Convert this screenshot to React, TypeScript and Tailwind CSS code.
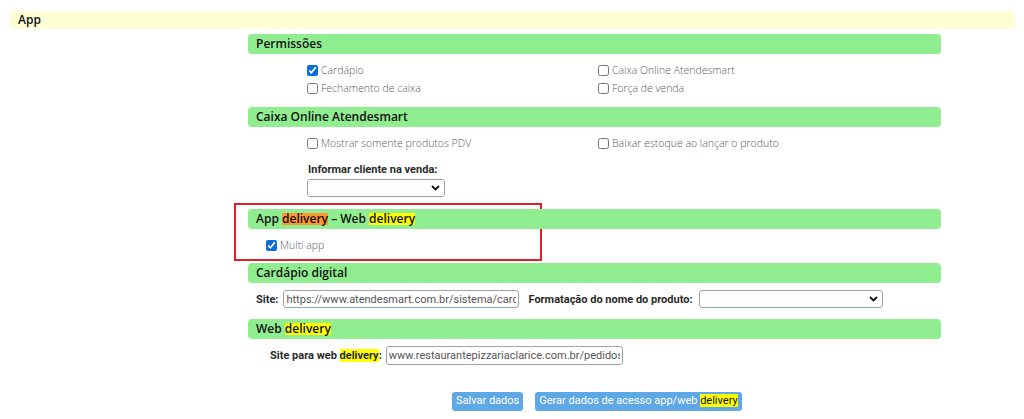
import React from 'react';

const head = "font-['Open_Sans',sans-serif] font-semibold text-[12px] text-[#111] leading-none";
const lbl = "font-['Open_Sans',sans-serif] font-light text-[10.5px] text-[#5c5c5c] leading-none";
const form = "font-['Roboto',sans-serif] font-bold text-[11px] text-[#2a2a2a] leading-none";

const Hl = ({ children, orange }: { children: React.ReactNode; orange?: boolean }) => (
  <span className={orange ? 'bg-[#ff9632]' : 'bg-[#ffff00]'}>{children}</span>
);

const SectionHeader = ({ children }: { children: React.ReactNode }) => (
  <div className={`h-[20px] bg-[#90ee90] rounded-[4px] flex items-center pl-[8px] ${head}`}>{children}</div>
);

const Check = ({ label, checked }: { label: string; checked?: boolean }) => (
  <label className="flex items-center gap-[3px] h-[12px]">
    <input type="checkbox" defaultChecked={checked} className="w-[11px] h-[11px] m-0 accent-[#0b6ed9]" />
    <span className={lbl}>{label}</span>
  </label>
);

const Select = ({ w }: { w: string }) => (
  <div className={`${w} h-[18px] border border-[#9aa3ad] rounded-[3px] bg-white flex items-center justify-end pr-[4px]`}>
    <svg width="9" height="6" viewBox="0 0 9 6">
      <path d="M1 1l3.5 3.5L8 1" fill="none" stroke="#111" strokeWidth="1.8" />
    </svg>
  </div>
);

export default function App() {
  return (
    <div className="w-[1024px] h-[419px] bg-white overflow-hidden pt-[11px]">
      <div className="ml-[10px] w-[1005px] h-[18px] bg-[#fffdd4] rounded-[3px] flex items-center pl-[8px] font-['Open_Sans',sans-serif] font-semibold text-[12px] text-[#111]">
        App
      </div>

      <div className="ml-[248px] w-[693px] mt-[5px]">
        <SectionHeader>Permissões</SectionHeader>
        <div className="pl-[59px] grid grid-cols-[291px_1fr] gap-y-[6px] mt-[10px]">
          <Check label="Cardápio" checked />
          <Check label="Caixa Online Atendesmart" />
          <Check label="Fechamento de caixa" />
          <Check label="Força de venda" />
        </div>

        <div className="mt-[13px]">
          <SectionHeader>Caixa Online Atendesmart</SectionHeader>
        </div>
        <div className="pl-[59px] grid grid-cols-[291px_1fr] mt-[10px]">
          <Check label="Mostrar somente produtos PDV" />
          <Check label="Baixar estoque ao lançar o produto" />
        </div>
        <div className="pl-[60px] mt-[15px]">
          <div className={form}>Informar cliente na venda:</div>
          <div className="mt-[4px] -ml-[1px]">
            <Select w="w-[138px]" />
          </div>
        </div>
      </div>

      <div className="ml-[234px] w-[308px] h-[58px] mt-[6px] border-2 border-[#d9232a] relative">
        <div className="absolute left-[12px] top-[4px] w-[693px]">
          <SectionHeader>
            App&nbsp;<Hl orange>delivery</Hl>&nbsp;– Web&nbsp;<Hl>delivery</Hl>
          </SectionHeader>
          <div className="pl-[18px] mt-[10px]">
            <Check label="Multi app" checked />
          </div>
        </div>
      </div>

      <div className="ml-[248px] w-[693px] mt-[2px]">
        <SectionHeader>Cardápio digital</SectionHeader>
        <div className="flex items-center pl-[8px] mt-[7px] h-[18px]">
          <span className={form}>Site:</span>
          <input
            readOnly
            value="https://www.atendesmart.com.br/sistema/cardapio"
            className="ml-[5px] w-[236px] h-[18px] border border-[#9aa3ad] rounded-[3px] px-[2px] font-['Roboto',sans-serif] text-[11px] text-[#555] outline-none"
          />
          <span className={`${form} ml-[9px]`}>Formatação do nome do produto:</span>
          <div className="ml-[6px]">
            <Select w="w-[184px]" />
          </div>
        </div>

        <div className="mt-[11px]">
          <SectionHeader>
            Web&nbsp;<Hl>delivery</Hl>
          </SectionHeader>
        </div>
        <div className="flex items-center pl-[22px] mt-[7px] h-[19px]">
          <span className={form}>
            Site para web <Hl>delivery</Hl>:
          </span>
          <input
            readOnly
            value="www.restaurantepizzariaclarice.com.br/pedidos-online"
            className="ml-[4px] w-[237px] h-[19px] border border-[#9aa3ad] rounded-[3px] px-[2px] font-['Roboto',sans-serif] text-[11px] text-[#555] outline-none"
          />
        </div>
      </div>

      <div className="ml-[452px] mt-[27px] flex gap-[12px] font-['Roboto',sans-serif] text-[11px] text-white">
        <button className="h-[19px] px-[4px] bg-[#5fa8e6] rounded-[3px]">Salvar dados</button>
        <button className="h-[19px] px-[4px] bg-[#5fa8e6] rounded-[3px]">
          Gerar dados de acesso app/web <span className="bg-[#ffff00] text-[#111]">delivery</span>
        </button>
      </div>
    </div>
  );
}
